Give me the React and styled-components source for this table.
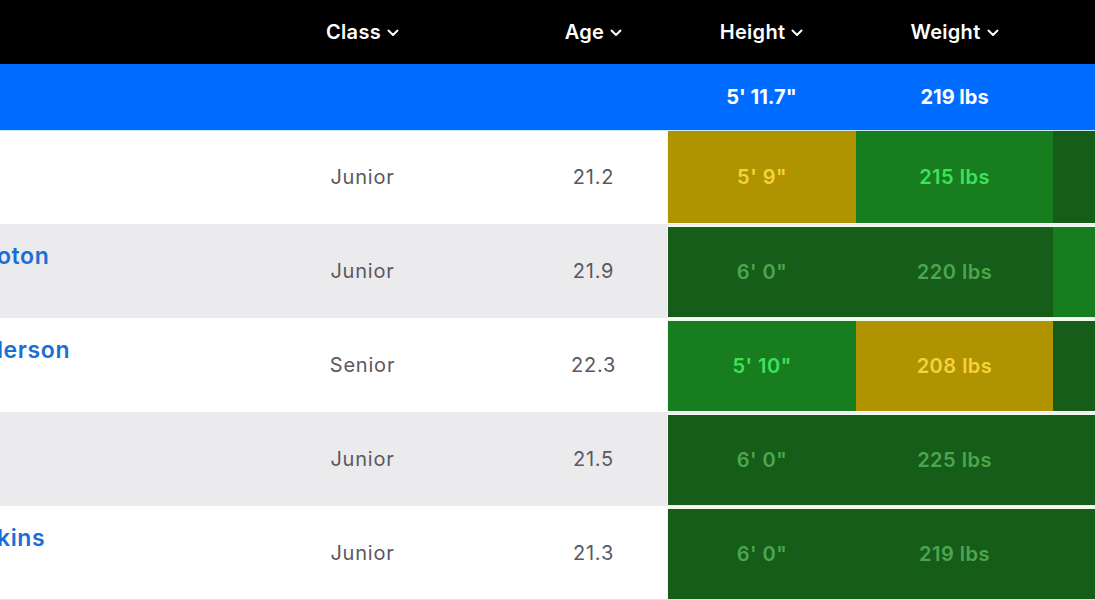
import styled, { createGlobalStyle } from "styled-components";

const GlobalStyle = createGlobalStyle`
  html, body {
    margin: 0;
    padding: 0;
    background: #fff;
    overflow: hidden;
  }
  body {
    font-family: "Inter", "Open Sans", "DejaVu Sans", sans-serif;
  }
`;

const COLUMNS = "270px 185px 212px 189px 197px 1fr";

const tones = {
  gold: { bg: "#b09300", fg: "#f6d33c" },
  mid: { bg: "#177d1f", fg: "#3fe25c" },
  dark: { bg: "#165d1a", fg: "#4ca650" },
};

const Table = styled.div`
  width: 1095px;
  height: 600px;
  overflow: hidden;
  display: flex;
  flex-direction: column;
`;

const HeadRow = styled.div`
  display: grid;
  grid-template-columns: ${COLUMNS};
  height: 64px;
  background: #000;
  color: #fff;
`;

const HeadCell = styled.div`
  display: flex;
  align-items: center;
  justify-content: center;
  gap: 6px;
  font-size: 20px;
  font-weight: 600;
  letter-spacing: 0.3px;
  padding-left: ${(p) => (p.$pad ? p.$pad : 0)}px;
  svg {
    margin-top: 2px;
  }
`;

const AvgRow = styled.div`
  display: grid;
  grid-template-columns: ${COLUMNS};
  height: 66px;
  background: #006cff;
  color: #fff;
`;

const AvgCell = styled.div`
  display: flex;
  align-items: center;
  justify-content: center;
  font-size: 20px;
  font-weight: 700;
`;

const Row = styled.div`
  display: grid;
  grid-template-columns: ${COLUMNS};
  height: 94px;
  background: ${(p) => (p.$alt ? "#ebeaed" : "#fff")};
  border-top: 1px solid ${(p) => (p.$first ? "#c9ecfb" : "transparent")};
  border-bottom: 1px solid ${(p) => (p.$last ? "#e2e2e2" : "transparent")};
  box-sizing: border-box;
`;

const NameCell = styled.div`
  overflow: hidden;
  padding-top: 17px;
  font-size: 23px;
  font-weight: 600;
  letter-spacing: 0.6px;
  color: #1a6fd6;
  white-space: nowrap;
  span {
    display: block;
    margin-left: -3px;
  }
`;

const TextCell = styled.div`
  display: flex;
  align-items: center;
  justify-content: center;
  font-size: 20px;
  font-weight: 400;
  letter-spacing: 0.8px;
  color: #5a5860;
  padding-left: ${(p) => (p.$pad ? p.$pad : 0)}px;
`;

const MetricCell = styled.div`
  display: flex;
  align-items: center;
  justify-content: center;
  font-size: 20px;
  font-weight: 600;
  letter-spacing: 0.5px;
  background: ${(p) => tones[p.$tone].bg};
  color: ${(p) => tones[p.$tone].fg};
  border-top: ${(p) => (p.$first ? "0" : "2px solid #eefbea")};
  border-left: ${(p) => (p.$edge ? "1px solid #eefbea" : "0")};
`;

const Chevron = () => (
  <svg width="12" height="8" viewBox="0 0 12 8" fill="none">
    <path
      d="M1.5 1.5 L6 6 L10.5 1.5"
      stroke="#fff"
      strokeWidth="2"
      strokeLinecap="round"
      strokeLinejoin="round"
    />
  </svg>
);

const rows = [
  { name: "", cls: "Junior", age: "21.2", height: ["5' 9\"", "gold"], weight: ["215 lbs", "mid"], next: "dark" },
  { name: "oton", cls: "Junior", age: "21.9", height: ["6' 0\"", "dark"], weight: ["220 lbs", "dark"], next: "mid" },
  { name: "lerson", cls: "Senior", age: "22.3", height: ["5' 10\"", "mid"], weight: ["208 lbs", "gold"], next: "dark" },
  { name: "", cls: "Junior", age: "21.5", height: ["6' 0\"", "dark"], weight: ["225 lbs", "dark"], next: "dark" },
  { name: "kins", cls: "Junior", age: "21.3", height: ["6' 0\"", "dark"], weight: ["219 lbs", "dark"], next: "dark" },
];

export default function App() {
  return (
    <>
      <GlobalStyle />
      <Table>
        <HeadRow>
          <HeadCell />
          <HeadCell>
            Class <Chevron />
          </HeadCell>
          <HeadCell $pad={65}>
            Age <Chevron />
          </HeadCell>
          <HeadCell>
            Height <Chevron />
          </HeadCell>
          <HeadCell>
            Weight <Chevron />
          </HeadCell>
          <HeadCell />
        </HeadRow>
        <AvgRow>
          <AvgCell />
          <AvgCell />
          <AvgCell />
          <AvgCell>5' 11.7"</AvgCell>
          <AvgCell>219 lbs</AvgCell>
          <AvgCell />
        </AvgRow>
        {rows.map((r, i) => (
          <Row
            key={i}
            $alt={i % 2 === 1}
            $first={i === 0}
            $last={i === rows.length - 1}
          >
            <NameCell>
              <span>{r.name}</span>
            </NameCell>
            <TextCell>{r.cls}</TextCell>
            <TextCell $pad={65}>{r.age}</TextCell>
            <MetricCell $tone={r.height[1]} $first={i === 0} $edge>
              {r.height[0]}
            </MetricCell>
            <MetricCell $tone={r.weight[1]} $first={i === 0}>
              {r.weight[0]}
            </MetricCell>
            <MetricCell $tone={r.next} $first={i === 0} />
          </Row>
        ))}
      </Table>
    </>
  );
}
